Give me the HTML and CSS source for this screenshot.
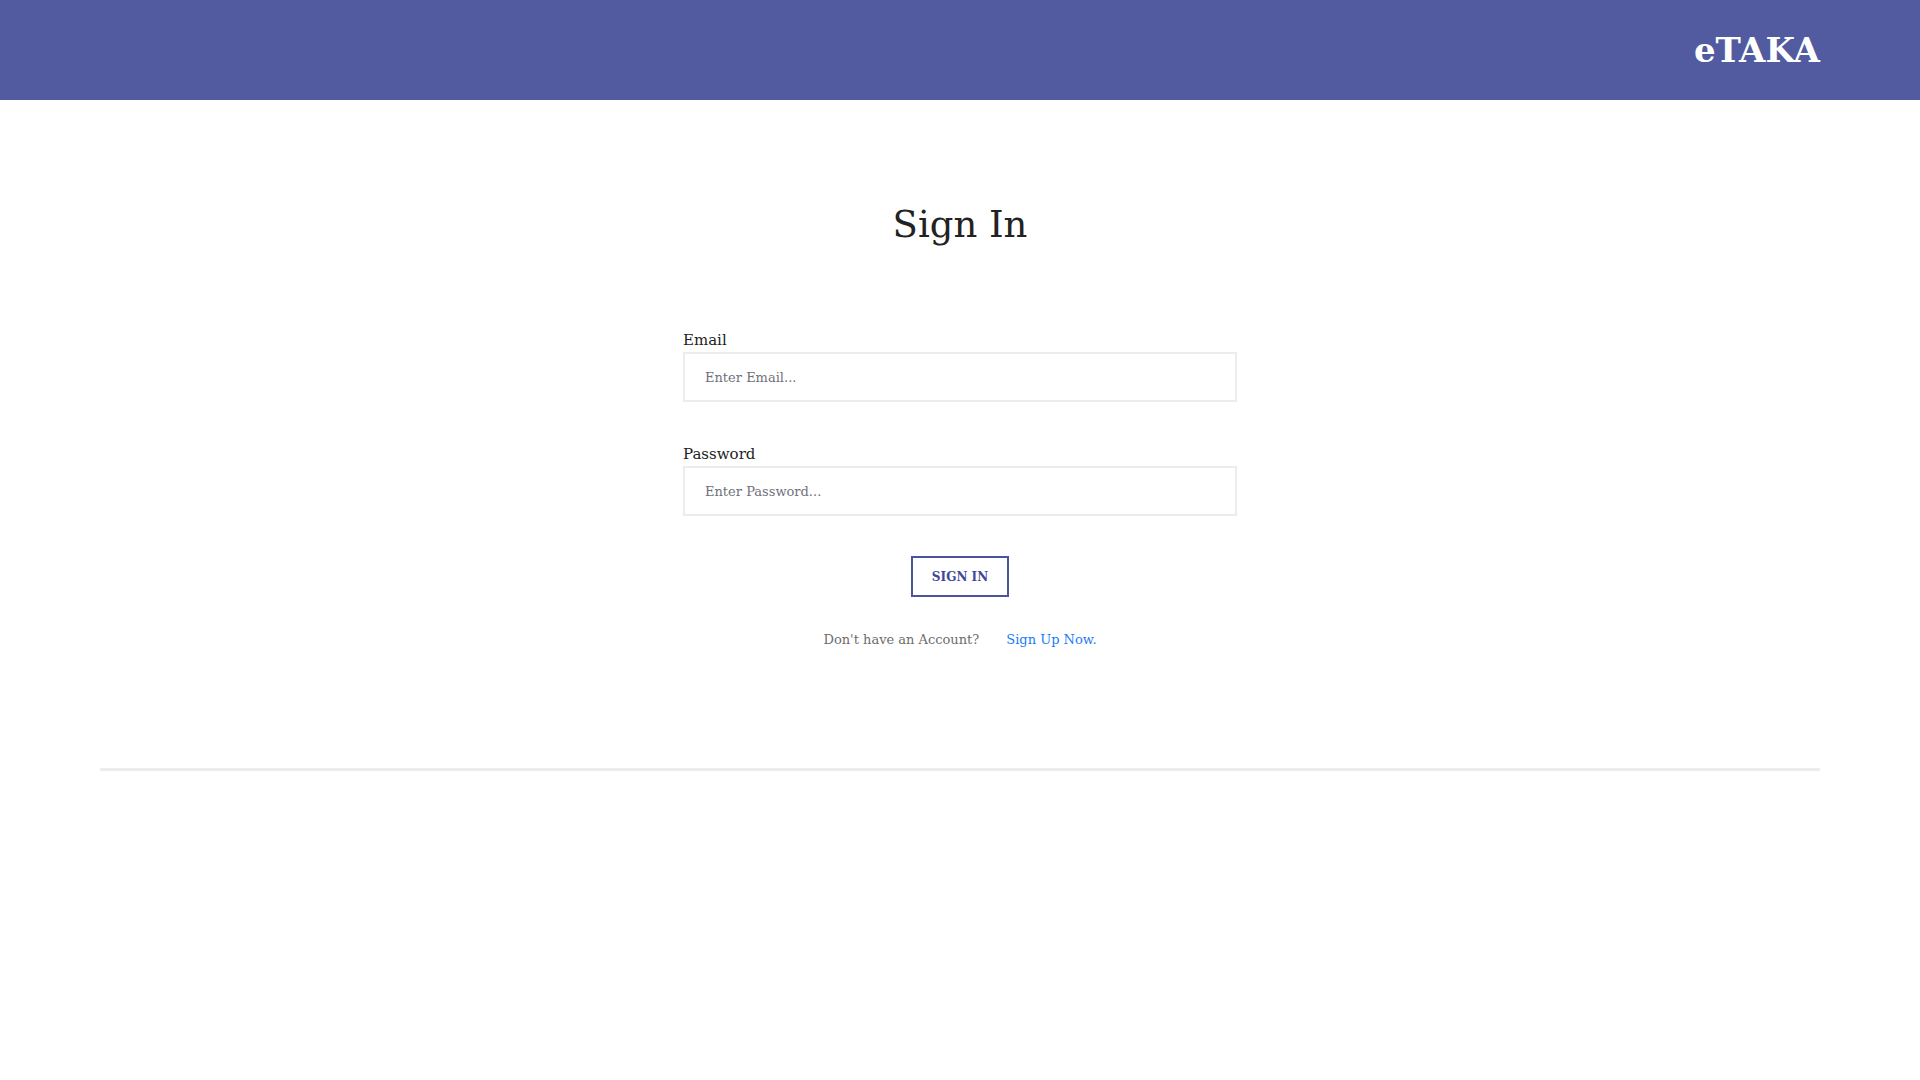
FILE: index.html
```html
<!DOCTYPE html>
<html lang="en">
<head>
    <meta charset="UTF-8">
    <meta name="viewport" content="width=device-width, initial-scale=1.0">
    <title>eTAKA - Sign In</title>
    <link rel="stylesheet" href="styles.css">
</head>
<body>
    <div class="header">
        <div class="header-inner">
            <a class="logo">eTAKA</a>
        </div>
    </div>
    <div class="main">
        <h1 class="title">Sign In</h1>
        <form class="login-form">
            <div class="form-group">
                <label for="email">Email</label>
                <input type="text" id="email" placeholder="Enter Email...">
            </div>
            <div class="form-group">
                <label for="password">Password</label>
                <input type="password" id="password" placeholder="Enter Password...">
            </div>
            <div class="btn-box">
                <button type="button" class="btn">Sign In</button>
            </div>
            <p class="signup">
                <span>Don't have an Account?</span>
                <a href="#">Sign Up Now.</a>
            </p>
        </form>
        <div class="divider"></div>
    </div>
</body>
</html>
```

FILE: styles.css
```css
body,
h1,
p{
    margin: 0;
    padding: 0;
}
body{
    font-family: "Roboto Slab", "DejaVu Serif", "Liberation Serif", serif;
    color: #222;
    background-color: #fff;
}
.header{
    height: 100px;
    background-color: #525ba0;
}
.header-inner{
    height: 100%;
    padding: 0 100px;
    display: flex;
    align-items: center;
    justify-content: flex-end;
}
.logo{
    color: #fff;
    font-size: 34px;
    font-weight: bold;
    text-decoration: none;
}
.main{
    padding: 101px 100px 0;
}
.title{
    font-size: 37px;
    font-weight: normal;
    line-height: 48px;
    text-align: center;
    color: #222;
}
.login-form{
    width: 554px;
    margin: 79px auto 0;
}
.form-group{
    display: flex;
    flex-direction: column;
    margin-bottom: 40px;
}
.form-group label{
    font-size: 15px;
    line-height: 24px;
    color: #222;
}
.form-group input{
    height: 50px;
    box-sizing: border-box;
    border: 2px solid #ececec;
    outline: none;
    padding: 0 20px;
    font-family: inherit;
    font-size: 13px;
    color: #333;
}
.form-group input::placeholder{
    color: #6f717a;
}
.btn-box{
    display: flex;
    justify-content: center;
    margin-top: 1px;
}
.btn{
    width: 98px;
    height: 41px;
    border: 2px solid #4c54a0;
    background-color: #fff;
    color: #3f4897;
    font-family: inherit;
    font-size: 12px;
    font-weight: bold;
    text-transform: uppercase;
    cursor: pointer;
}
.signup{
    margin-top: 33px;
    display: flex;
    justify-content: center;
    gap: 27px;
    font-size: 13px;
    line-height: 20px;
}
.signup span{
    color: #6c6c6c;
}
.signup a{
    color: #1a7cf5;
    text-decoration: none;
}
.divider{
    margin-top: 118px;
    border-top: 3px solid #ececec;
}
```
